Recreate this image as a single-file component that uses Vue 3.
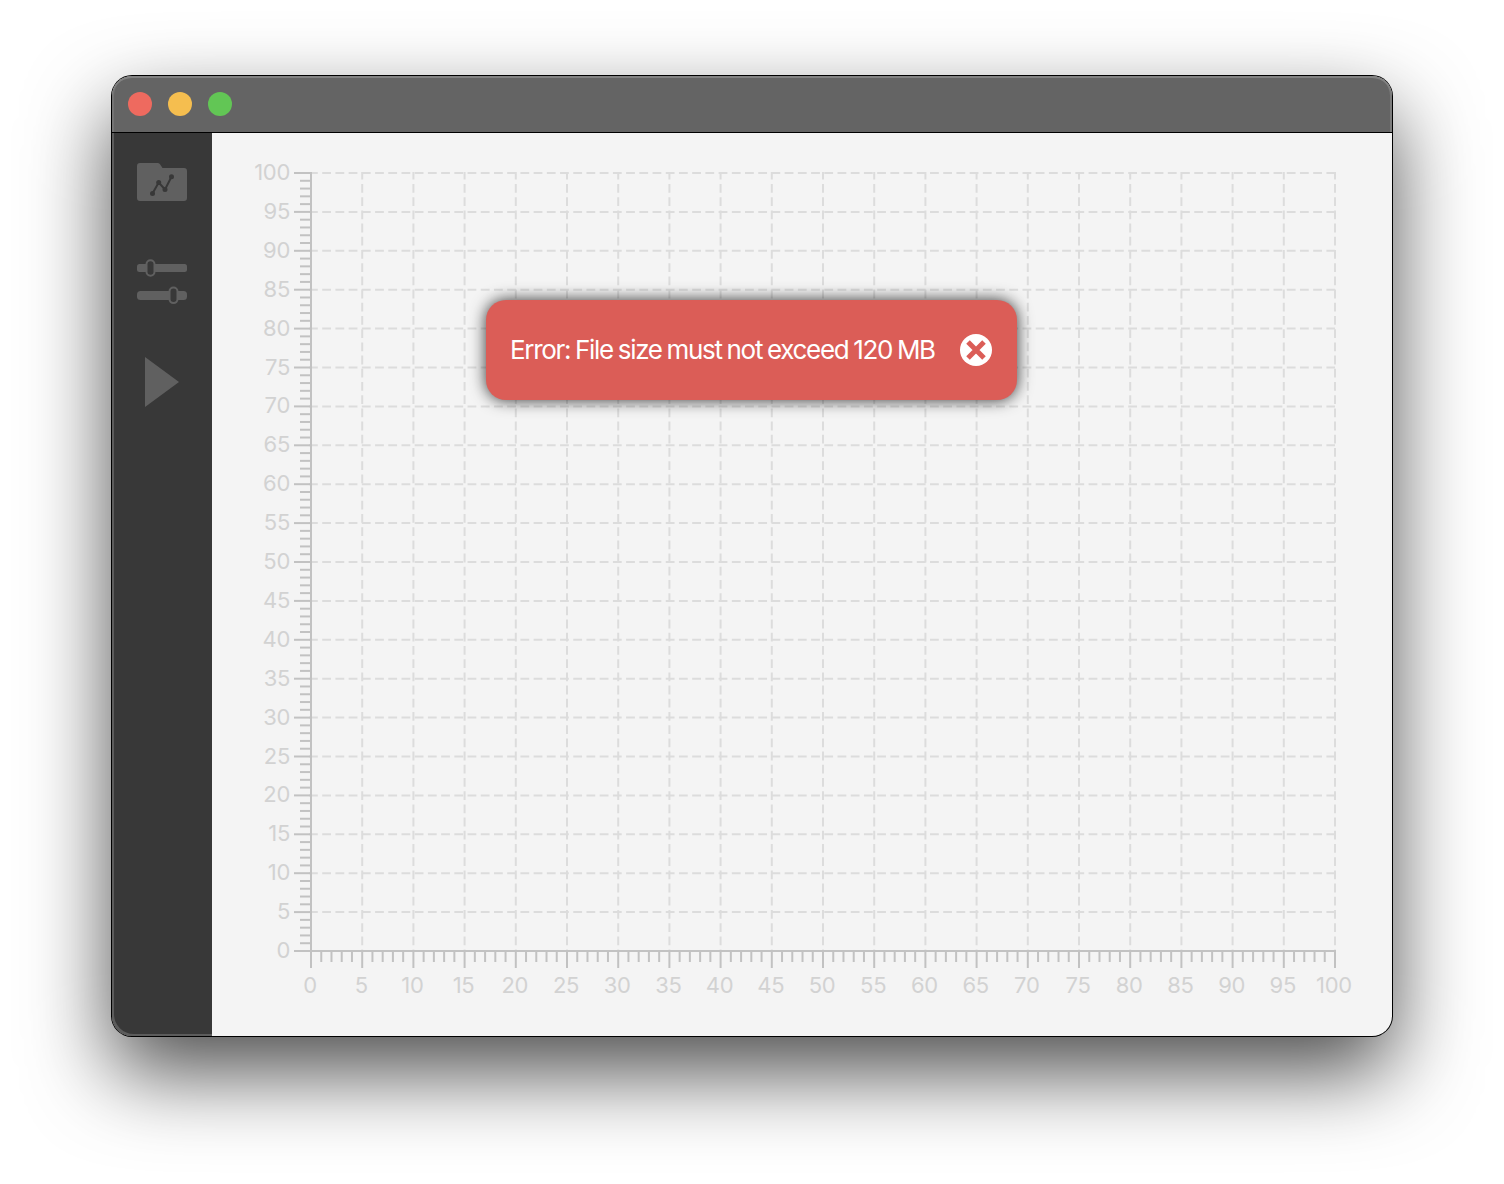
<script setup>
const steps = Array.from({ length: 101 }, (_, value) => value)
const majors = steps.filter((value) => value % 5 === 0)

// Plot area inside the chart canvas
const left = 99
const right = 1123
const top = 40
const bottom = 818

const xAt = (value) => left + (value * (right - left)) / 100
const yAt = (value) => bottom - (value * (bottom - top)) / 100
</script>

<template>
  <div class="desktop">
    <main class="window">
      <header class="titlebar">
        <span class="light close"></span>
        <span class="light minimize"></span>
        <span class="light expand"></span>
      </header>
      <div class="body">
        <nav class="sidebar">
          <button class="tool" aria-label="Open data">
            <svg width="50" height="38" viewBox="0 0 50 38">
              <path class="fill" d="M3 0H20.500Q22 0 23 1.300L25.500 5H47Q50 5 50 8V35Q50 38 47 38H3Q0 38 0 35V3Q0 0 3 0Z" />
              <path class="trace" d="M15.500 30.500L21.700 19.500L28 26.500L34.500 13.700" />
              <circle cx="15.500" cy="30.500" r="2.500" />
              <circle cx="21.700" cy="19.500" r="2.500" />
              <circle cx="28" cy="26.500" r="2.500" />
              <circle cx="34.500" cy="13.700" r="2.500" />
            </svg>
          </button>
          <button class="tool settings" aria-label="Settings">
            <svg width="50" height="46" viewBox="0 0 50 46">
              <rect class="fill" x="0" y="5" width="50" height="8" rx="2.500" />
              <rect class="fill" x="0" y="32" width="50" height="9" rx="3.500" />
              <rect class="knob" x="9.500" y="1.200" width="8" height="15.600" rx="4" />
              <rect class="knob" x="32.500" y="28.500" width="8" height="15.600" rx="4" />
            </svg>
          </button>
          <button class="tool play" aria-label="Run">
            <svg width="34" height="50" viewBox="0 0 34 50">
              <path class="fill" d="M0 0L34 25L0 50Z" />
            </svg>
          </button>
        </nav>
        <section class="content">
          <svg class="chart" width="1180" height="903" viewBox="0 0 1180 903">
            <g class="grid">
              <line v-for="v in majors.slice(1)" :key="'h' + v" :x1="left - 2" :x2="right" :y1="yAt(v)" :y2="yAt(v)" />
              <line v-for="v in majors.slice(1)" :key="'v' + v" :x1="xAt(v)" :x2="xAt(v)" :y1="top - 1" :y2="bottom" class="down" />
            </g>
            <g class="axis">
              <line v-for="v in steps" :key="'y' + v" :x1="v % 5 ? 88 : 82" :x2="left" :y1="yAt(v)" :y2="yAt(v)" />
              <line v-for="v in steps" :key="'x' + v" :x1="xAt(v)" :x2="xAt(v)" :y1="bottom" :y2="v % 5 ? 829 : 835" />
              <path :d="`M${left} ${top - 1}V${bottom}H${right + 1}`" />
            </g>
            <g class="labels">
              <text v-for="v in majors" :key="'ly' + v" x="78" :y="yAt(v) + 7" text-anchor="end">{{ v }}</text>
              <text v-for="v in majors" :key="'lx' + v" :x="xAt(v) - 1" y="860" text-anchor="middle">{{ v }}</text>
            </g>
          </svg>
        </section>
      </div>
      <div class="toast" role="alert">
        <span class="message">Error: File size must not exceed 120 MB</span>
        <svg width="32" height="32" viewBox="0 0 32 32">
          <circle cx="16" cy="16" r="16" fill="#fff" />
          <path d="M8 8L24 24M24 8L8 24" stroke="#db5d57" stroke-width="5" />
        </svg>
      </div>
    </main>
  </div>
</template>

<style>
body {
  background: #fff;
}
</style>

<style scoped>
.desktop {
  box-sizing: border-box;
  width: 1504px;
  height: 1184px;
  padding: 76px 112px;
  overflow: hidden;
  background: #fff;
  font-family: Inter, "Liberation Sans", sans-serif;
}
.window {
  position: relative;
  display: flex;
  flex-direction: column;
  width: 1280px;
  height: 960px;
  border-radius: 20px;
  background: #f4f4f4;
  box-shadow: 0 0 0 1px #000, 0 36px 84px rgba(0, 0, 0, 0.7);
}
.titlebar {
  box-sizing: border-box;
  display: flex;
  align-items: center;
  gap: 16px;
  height: 57px;
  padding: 0 16px;
  border-bottom: 1px solid #000;
  border-radius: 20px 20px 0 0;
  background: #646464;
  box-shadow: inset 0 2px 0 #828282, inset 2px 0 0 #747474, inset -2px 0 0 #7c7c7c;
}
.light {
  width: 24px;
  height: 24px;
  border-radius: 50%;
}
.close {
  background: #ee6a5f;
}
.minimize {
  background: #f5be4f;
}
.expand {
  background: #62c655;
}
.body {
  display: flex;
  flex: 1;
}
.sidebar {
  box-sizing: border-box;
  display: flex;
  flex-direction: column;
  align-items: center;
  width: 100px;
  padding-top: 30px;
  border-bottom-left-radius: 20px;
  background: #383838;
  box-shadow: inset 2px -2px 0 #5c5c5c;
}
.tool {
  display: flex;
  padding: 0;
  border: 0;
  background: none;
}
.settings {
  margin-top: 58px;
}
.play {
  margin-top: 52px;
}
.fill {
  fill: #606060;
}
.trace {
  fill: none;
  stroke: #383838;
  stroke-width: 2;
}
.tool circle {
  fill: #383838;
}
.knob {
  fill: #383838;
  stroke: #606060;
  stroke-width: 2;
}
.content {
  flex: 1;
}
.chart {
  display: block;
}
.grid line {
  stroke: #dcdcdc;
  stroke-width: 2;
  stroke-dasharray: 8.8 4.413;
}
.grid .down {
  stroke-dasharray: 8.8 4.4;
  stroke-dashoffset: 1.2;
}
.axis {
  fill: none;
  stroke: #c2c2c2;
  stroke-width: 2;
}
.labels {
  fill: #d2d2d2;
  font-size: 22px;
  letter-spacing: -0.3px;
}
.toast {
  position: absolute;
  top: 224px;
  left: 374px;
  box-sizing: border-box;
  display: flex;
  align-items: center;
  justify-content: space-between;
  width: 531px;
  height: 100px;
  padding: 0 25px 0 24px;
  border-radius: 20px;
  background: #db5d57;
  box-shadow: 0 0 16px rgba(0, 0, 0, 0.8);
}
.message {
  padding-bottom: 2px;
  color: #fff;
  font-size: 26px;
  letter-spacing: -1.3px;
  word-spacing: -1.2px;
  white-space: nowrap;
}
</style>
